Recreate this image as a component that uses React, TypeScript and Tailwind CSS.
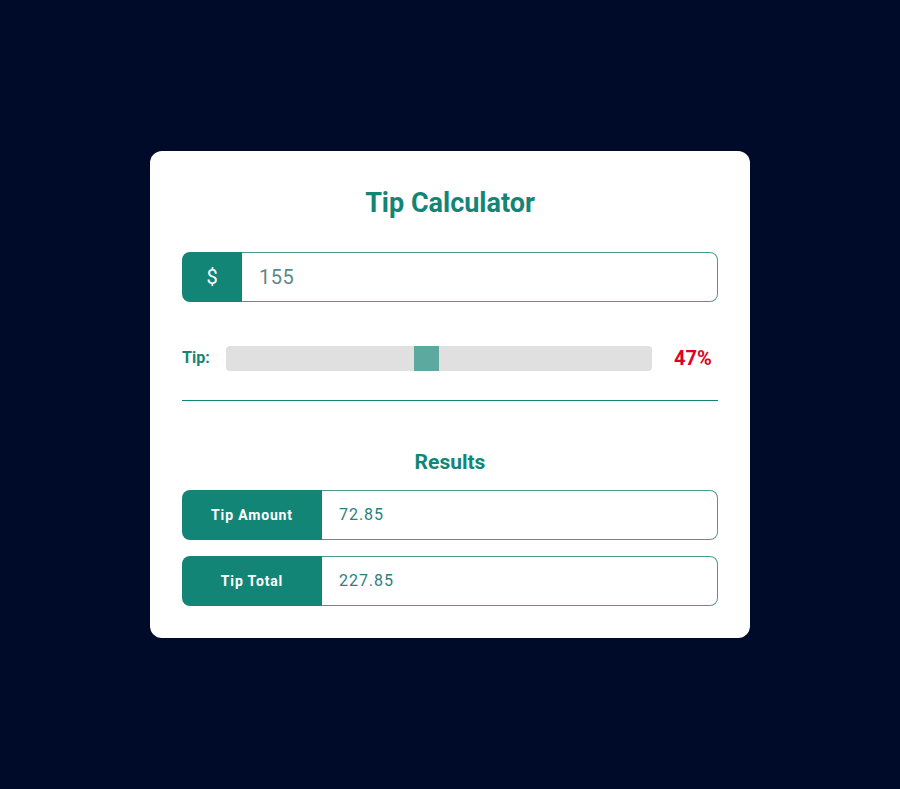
import React, { useState } from 'react';

export default function App() {
  const [bill, setBill] = useState('155');
  const [tip, setTip] = useState(47);

  const amount = parseFloat(bill) || 0;
  const tipAmount = (amount * tip) / 100;
  const total = amount + tipAmount;

  return (
    <div
      className="min-h-screen w-full bg-[#000b29] flex items-center justify-center"
      style={{ fontFamily: 'Roboto, "Liberation Sans", sans-serif' }}
    >
      <div className="w-[600px] bg-white rounded-xl px-8 pt-[33px] pb-8">
        <h1 className="text-center text-[27px] leading-[38px] font-bold text-[#138577]">Tip Calculator</h1>

        <div className="mt-[30px] flex h-[50px]">
          <div className="w-[60px] flex items-center justify-center bg-[#138577] text-white text-xl rounded-l-lg">
            $
          </div>
          <input
            type="text"
            value={bill}
            onChange={(e) => setBill(e.target.value)}
            className="flex-1 min-w-0 border border-l-0 border-[#4f9a8e] rounded-r-lg px-[17px] text-[20px] text-[#5c8987] tracking-wide outline-none"
          />
        </div>

        <div className="mt-[43px] flex items-center h-[26px]">
          <span className="w-[44px] text-base font-bold text-[#138577]">Tip:</span>
          <div className="relative w-[426px] h-[25px] bg-[#e0e0e0] rounded-sm">
            <div className="absolute top-0 left-[188px] w-[25px] h-[25px] bg-[#5ca99f]" />
            <input
              type="range"
              min={0}
              max={100}
              value={tip}
              onChange={(e) => setTip(Number(e.target.value))}
              className="absolute inset-0 w-full h-full opacity-0 cursor-pointer"
            />
          </div>
          <span className="ml-[22px] text-xl font-bold text-[#e00024]">{tip}%</span>
        </div>

        <div className="mt-[29px] h-px bg-[#138577]" />

        <h2 className="mt-[49px] text-center text-[21px] leading-6 font-bold text-[#138577]">Results</h2>

        <div className="mt-[16px] flex flex-col gap-4">
          {[
            ['Tip Amount', tipAmount.toFixed(2)],
            ['Tip Total', total.toFixed(2)],
          ].map(([label, value]) => (
            <div key={label} className="flex h-[50px]">
              <div className="w-[140px] flex items-center justify-center bg-[#138577] text-white text-sm font-bold tracking-[0.06em] rounded-l-lg">
                {label}
              </div>
              <div className="flex-1 flex items-center border border-l-0 border-[#4f9a8e] rounded-r-lg pl-[17px] text-base tracking-[0.06em] text-[#2a807c]">
                {value}
              </div>
            </div>
          ))}
        </div>
      </div>
    </div>
  );
}
